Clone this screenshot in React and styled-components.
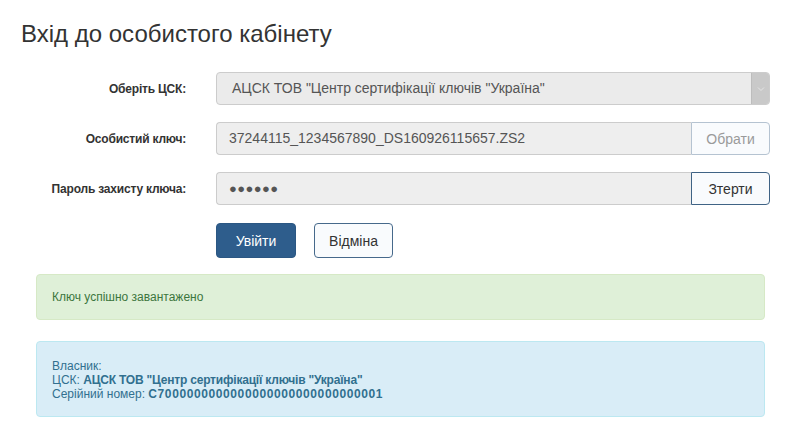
import React from 'react';
import styled, { createGlobalStyle } from 'styled-components';

const GlobalStyle = createGlobalStyle`
  body {
    margin: 0;
    background: #ffffff;
    font-family: "Liberation Sans", Arial, sans-serif;
    color: #333333;
  }
  * { box-sizing: border-box; }
`;

const fields = [
  { id: 'key', label: 'Особистий ключ:', value: '37244115_1234567890_DS160926115657.ZS2', action: 'Обрати', muted: true },
  { id: 'pass', label: 'Пароль захисту ключа:', value: '●●●●●●', action: 'Зтерти', muted: false, secret: true },
];

const App = () => {
  return (
    <>
      <GlobalStyle />
      <Page>
        <Title>Вхід до особистого кабінету</Title>

        <Form>
          <Row>
            <Label>Оберіть ЦСК:</Label>
            <Select>
              <SelectText>АЦСК ТОВ "Центр сертифікації ключів "Україна"</SelectText>
              <SelectArrow>
                <svg width="8" height="6" viewBox="0 0 8 6">
                  <path d="M1 1.5 L4 4.5 L7 1.5" fill="none" stroke="#e4e4e4" strokeWidth="1" />
                </svg>
              </SelectArrow>
            </Select>
          </Row>

          {fields.map((f) => (
            <Row key={f.id}>
              <Label>{f.label}</Label>
              <InputGroup>
                <Field $secret={f.secret}>{f.value}</Field>
                <AddonButton $muted={f.muted}>{f.action}</AddonButton>
              </InputGroup>
            </Row>
          ))}

          <Row>
            <span />
            <Actions>
              <PrimaryButton>Увійти</PrimaryButton>
              <OutlineButton>Відміна</OutlineButton>
            </Actions>
          </Row>
        </Form>

        <SuccessAlert>Ключ успішно завантажено</SuccessAlert>

        <InfoAlert>
          <div>Власник:</div>
          <div>ЦСК: <b>АЦСК ТОВ "Центр сертифікації ключів "Україна"</b></div>
          <div>Серійний номер: <Serial>C7000000000000000000000000000001</Serial></div>
        </InfoAlert>
      </Page>
    </>
  );
};

const Page = styled.div`
  width: 801px;
  height: 440px;
  padding: 21px 31px 0 0;
  overflow: hidden;
`;

const Title = styled.h1`
  margin: 0 0 25px 21px;
  font-size: 24px;
  line-height: 26px;
  font-weight: 400;
  color: #333333;
`;

const Form = styled.div`
  display: flex;
  flex-direction: column;
  gap: 17px;
`;

const Row = styled.div`
  display: grid;
  grid-template-columns: 186px 1fr;
  column-gap: 30px;
  align-items: center;
`;

const Label = styled.div`
  text-align: right;
  font-size: 12px;
  font-weight: 700;
  letter-spacing: -0.2px;
  color: #333333;
`;

const Select = styled.div`
  display: flex;
  height: 33px;
  border: 1px solid #cccccc;
  border-radius: 4px;
  background: #ebebeb;
  overflow: hidden;
`;

const SelectText = styled.div`
  flex: 1;
  padding: 0 15px;
  font-size: 14px;
  line-height: 31px;
  color: #555555;
`;

const SelectArrow = styled.div`
  width: 18px;
  display: flex;
  align-items: center;
  justify-content: center;
  background: #c9c9c9;
  border-left: 1px solid #bdbdbd;
`;

const InputGroup = styled.div`
  display: flex;
  height: 33px;
`;

const Field = styled.div`
  flex: 1;
  border: 1px solid #cccccc;
  border-right: none;
  border-radius: 4px 0 0 4px;
  background: #eeeeee;
  padding: 0 12px;
  font-size: ${(p) => (p.$secret ? '13px' : '14px')};
  letter-spacing: ${(p) => (p.$secret ? '0.4px' : '0')};
  line-height: 31px;
  color: #555555;
`;

const AddonButton = styled.button`
  width: 79px;
  border: 1px solid ${(p) => (p.$muted ? '#b5c3d1' : '#3f6385')};
  border-radius: 0 4px 4px 0;
  background: #f9fbfd;
  font-family: inherit;
  font-size: 14px;
  font-weight: 400;
  color: ${(p) => (p.$muted ? '#9a9a9a' : '#333333')};
  padding: 0;
`;

const Actions = styled.div`
  display: flex;
  gap: 18px;
  padding-top: 1px;
`;

const PrimaryButton = styled.button`
  width: 80px;
  height: 35px;
  border: 1px solid #2b5783;
  border-radius: 4px;
  background: #2e5d8c;
  color: #ffffff;
  font-family: inherit;
  font-size: 14px;
  font-weight: 400;
  padding: 0;
`;

const OutlineButton = styled.button`
  width: 79px;
  height: 35px;
  border: 1px solid #46698b;
  border-radius: 4px;
  background: #f9fbfd;
  color: #333333;
  font-family: inherit;
  font-size: 14px;
  font-weight: 400;
  padding: 0;
`;

const Alert = styled.div`
  margin-left: 36px;
  margin-right: 5px;
  border-radius: 4px;
  font-size: 12px;
  line-height: 14px;
  padding: 0 15px;
`;

const SuccessAlert = styled(Alert)`
  margin-top: 16px;
  height: 46px;
  display: flex;
  align-items: center;
  background: #dff0d8;
  border: 1px solid #d6e9c6;
  color: #3c763d;
`;

const InfoAlert = styled(Alert)`
  margin-top: 21px;
  height: 76px;
  padding-top: 17px;
  background: #d9edf7;
  border: 1px solid #bce8f1;
  color: #31708f;

  b { letter-spacing: -0.2px; }
`;

const Serial = styled.b`
  && { letter-spacing: 0.6px; }
`;

export default App;
